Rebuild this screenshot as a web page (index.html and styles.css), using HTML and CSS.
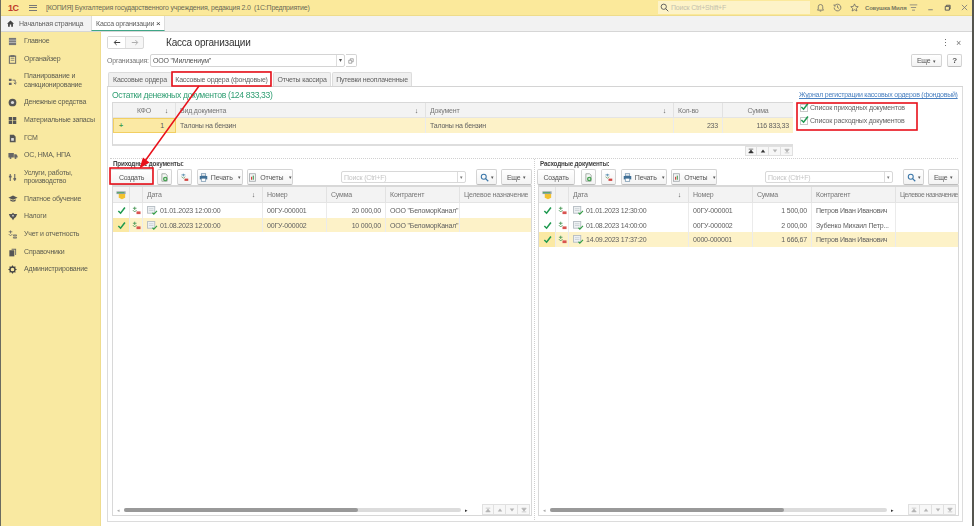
FILE: index.html
```html
<!DOCTYPE html>
<html lang="ru">
<head>
<meta charset="utf-8">
<title>Касса организации</title>
<link rel="stylesheet" href="styles.css">
</head>
<body>
<svg class="defs" width="0" height="0">
  <symbol id="i-check" viewBox="0 0 10 10"><path d="M1.5 5.500 4 8 8.800 1.600" fill="none" stroke="#1f9a50" stroke-width="1.700"/></symbol>
  <symbol id="i-dt" viewBox="0 0 10 10"><path d="M1 2.500h4M3 .8v3.600M1 4.600l2 2 2-2" fill="none" stroke="#4d9a5a" stroke-width="1"/><rect x="5" y="6" width="4.500" height="3" fill="#d9534f"/></symbol>
  <symbol id="i-doc" viewBox="0 0 12 10"><rect x=".5" y=".5" width="8" height="7.500" fill="#eef1f3" stroke="#b4bcc2"/><path d="M2 3h5M2 5h5" stroke="#c2c9ce" stroke-width=".8"/><path d="M6 7.500 7.500 9 11 5.500" fill="none" stroke="#35a045" stroke-width="1.300"/></symbol>
  <symbol id="i-head" viewBox="0 0 12 10"><rect x=".5" y="1" width="10" height="3" fill="#9aa5ac"/><path d="M3 4h7v4l-3.500 1.500L3 8z" fill="#f2c230"/><path d="M1 2.500h8" stroke="#45a85a"/></symbol>
  <symbol id="i-add" viewBox="0 0 12 12"><path d="M2.500 1h5l2 2v8h-7z" fill="#f4f7f4" stroke="#8e9a90"/><circle cx="7" cy="8" r="3" fill="#3f9d4a"/><path d="M5.500 8h3M7 6.500v3" stroke="#fff"/></symbol>
  <symbol id="i-post" viewBox="0 0 12 12"><path d="M2 2.500h5M4.500 1v3.500" stroke="#5a8fb0" stroke-width="1.200"/><path d="M2 5l2.500 2L7 5" fill="none" stroke="#6a9a60"/><rect x="6" y="7.500" width="5" height="3" fill="#d2443f"/></symbol>
  <symbol id="i-print" viewBox="0 0 12 12"><rect x="3" y="1" width="6" height="3" fill="#e9eef2" stroke="#527a9c" stroke-width=".8"/><rect x="1" y="4" width="10" height="4.500" fill="#3f6f96"/><rect x="3" y="7" width="6" height="4" fill="#fff" stroke="#527a9c" stroke-width=".8"/></symbol>
  <symbol id="i-report" viewBox="0 0 12 12"><rect x="2" y="1" width="8" height="10" fill="#f3f4f4" stroke="#9aa0a4"/><rect x="4" y="5" width="1.500" height="4" fill="#d2443f"/><rect x="6.300" y="3.500" width="1.500" height="5.500" fill="#4a9a55"/></symbol>
  <symbol id="i-search" viewBox="0 0 12 12"><circle cx="5" cy="5" r="3.300" fill="none" stroke="#3a76a8" stroke-width="1.400"/><path d="M7.500 7.500 11 11" stroke="#3a76a8" stroke-width="1.600"/></symbol>
  <symbol id="p-first" viewBox="0 0 8 8"><path d="M1 1.500h6M4 2.500 7 6.500H1z" stroke="currentColor" fill="currentColor" stroke-width=".8"/></symbol>
  <symbol id="p-up" viewBox="0 0 8 8"><path d="M4 2 7 6H1z" fill="currentColor"/></symbol>
  <symbol id="p-down" viewBox="0 0 8 8"><path d="M4 6 7 2H1z" fill="currentColor"/></symbol>
  <symbol id="p-last" viewBox="0 0 8 8"><path d="M1 6.500h6M4 5.500 7 1.500H1z" stroke="currentColor" fill="currentColor" stroke-width=".8"/></symbol>
</svg>

<div class="app">
  <header class="topbar">
    <span class="logo">1С</span>
    <span class="burger"><i></i><i></i><i></i></span>
    <span class="apptitle">[КОПИЯ] Бухгалтерия государственного учреждения, редакция 2.0&nbsp; (1С:Предприятие)</span>
    <span class="globalsearch">
      <svg class="gs-icon" viewBox="0 0 12 12"><circle cx="5" cy="5" r="3.500" fill="none" stroke="#555" stroke-width="1.200"/><path d="M7.500 7.500 11 11" stroke="#555" stroke-width="1.300"/></svg>
      Поиск Ctrl+Shift+F
    </span>
    <svg class="ti ti-bell" viewBox="0 0 12 12"><path d="M2 9.500h8L9 8V5a3 3 0 0 0-6 0v3zM5 10.800h2" fill="none" stroke="#666" stroke-width="1"/></svg>
    <svg class="ti ti-hist" viewBox="0 0 12 12"><path d="M2.300 3.500A4.500 4.500 0 1 1 1.500 6M1.500 1.800v2.200h2.200M6 3.300V6l2 1.200" fill="none" stroke="#666" stroke-width="1"/></svg>
    <svg class="ti ti-star" viewBox="0 0 12 12"><path d="M6 1.200 7.500 4.500l3.500.4-2.600 2.300.8 3.500L6 8.900l-3.200 1.800.8-3.500L1 4.900l3.500-.4z" fill="none" stroke="#666" stroke-width="1"/></svg>
    <span class="user">Совушка Миля</span>
    <svg class="ti ti-menu" viewBox="0 0 12 12"><path d="M1 2.500h10M2.500 6h7M4 9.500h4" stroke="#777" stroke-width="1"/></svg>
    <svg class="ti ti-min" viewBox="0 0 12 12"><path d="M3 9h6" stroke="#777" stroke-width="1.200"/></svg>
    <svg class="ti ti-max" viewBox="0 0 12 12"><path d="M3 4.500h5.500V9.500H3zM4.500 4.500V3h5v5H8.500" fill="none" stroke="#555" stroke-width="1.200"/></svg>
    <svg class="ti ti-close" viewBox="0 0 12 12"><path d="M2.500 2.500l7 7M9.500 2.500l-7 7" stroke="#777" stroke-width="1.100"/></svg>
  </header>

  <nav class="tabbar">
    <svg class="homeicon" viewBox="0 0 10 10"><path d="M5 .8 0 5.300h1.500V9.500h2.500V6.500h2v3h2.500V5.300H10z" fill="#444"/></svg>
    <span class="hometab">Начальная страница</span>
    <span class="doctab">Касса организации <b class="doctab-x">×</b></span>
  </nav>

  <div class="main">
    <aside class="sidebar">
      <div class="sitem"><svg class="sicon" viewBox="0 0 10 10"><path d="M1 1h8v8H1z" fill="#777"/><path d="M1 3.500h8M1 6h8" stroke="#eee" stroke-width=".6"/></svg><span>Главное</span></div>
      <div class="sitem"><svg class="sicon" viewBox="0 0 10 10"><rect x="1.500" y="1.200" width="7" height="8" fill="none" stroke="#666" stroke-width="1.100"/><path d="M3 .5h4v1.500H3zM3 4h4M3 6h4" stroke="#666" fill="#666" stroke-width=".7"/></svg><span>Органайзер</span></div>
      <div class="sitem two"><svg class="sicon" viewBox="0 0 10 10"><path d="M1 2h3v2.500H1zM1 6.500h3V9H1z" fill="#666"/><path d="M5 3.500h3v4M6.500 6.500 8 8l1.500-1.500" fill="none" stroke="#666"/></svg><span>Планирование и<br>санкционирование</span></div>
      <div class="sitem"><svg class="sicon" viewBox="0 0 10 10"><circle cx="5" cy="5" r="4.300" fill="#555"/><circle cx="5" cy="5" r="1.800" fill="#ddd"/></svg><span>Денежные средства</span></div>
      <div class="sitem"><svg class="sicon" viewBox="0 0 10 10"><path d="M.8 1h3.800v3.600H.8zM5.400 1h3.800v3.600H5.400zM.8 5.400h3.800V9H.8zM5.400 5.400h3.800V9H5.400z" fill="#555"/></svg><span>Материальные запасы</span></div>
      <div class="sitem"><svg class="sicon" viewBox="0 0 10 10"><path d="M2 .8h4.500L8.500 3v6.200H2z" fill="#555"/><rect x="3.500" y="4.500" width="3" height="3" fill="#ddd"/></svg><span>ГСМ</span></div>
      <div class="sitem"><svg class="sicon sicon-w" viewBox="0 0 12 10"><path d="M.5 2h6.500v5.500H.5zM7.500 3.500h2.500l1.500 2v2h-4z" fill="#666"/><circle cx="3" cy="8" r="1.200" fill="#666"/><circle cx="9" cy="8" r="1.200" fill="#666"/></svg><span>ОС, НМА, НПА</span></div>
      <div class="sitem two"><svg class="sicon" viewBox="0 0 10 10"><path d="M2.500 1v8M7.500 1v8" stroke="#666" stroke-width="1.200"/><path d="M1 3h3v2H1zM6 5.500h3v2H6z" fill="#666"/></svg><span>Услуги, работы,<br>производство</span></div>
      <div class="sitem"><svg class="sicon sicon-w" viewBox="0 0 12 10"><path d="M6 1.500 11.500 4 6 6.500.5 4z" fill="#555"/><path d="M2.800 6v1.800C4 9.200 8 9.200 9.200 7.800V6L6 7.500z" fill="#555"/></svg><span>Платное обучение</span></div>
      <div class="sitem"><svg class="sicon sicon-w" viewBox="0 0 12 10"><path d="M6 .5 7.500 2H11L9.500 5.500 7.500 7 6 9.500 4.500 7 2.500 5.500 1 2h3.500z" fill="#555"/><circle cx="6" cy="4" r="1" fill="#ddd"/></svg><span>Налоги</span></div>
      <div class="sitem"><svg class="sicon" viewBox="0 0 10 10"><path d="M.8 2h4M2.800.5v3.500M.8 4.500l2 2 2-2M6 5.500h3.500v1H6zM6 8h3.500v1H6z" fill="none" stroke="#666" stroke-width=".9"/></svg><span>Учет и отчетность</span></div>
      <div class="sitem"><svg class="sicon" viewBox="0 0 10 10"><path d="M4 .8h5v7H8V2H4z" fill="#666"/><path d="M1.500 2.500h5.500v6.800H1.500z" fill="#555"/></svg><span>Справочники</span></div>
      <div class="sitem"><svg class="sicon" viewBox="0 0 10 10"><circle cx="5" cy="5" r="2.800" fill="none" stroke="#444" stroke-width="1.500"/><path d="M5 .5v2M5 7.500v2M.5 5h2M7.500 5h2M1.800 1.800l1.400 1.400M6.800 6.800l1.400 1.400M1.800 8.200l1.400-1.400M6.800 3.200l1.400-1.400" stroke="#444" stroke-width="1.200"/></svg><span>Администрирование</span></div>
    </aside>

    <main class="content">
      <div class="headrow">
        <div class="navbtns">
          <span class="navbtn"><svg viewBox="0 0 10 8"><path d="M9 4H2M4.500 1 1.500 4l3 3" fill="none" stroke="#333" stroke-width="1.200"/></svg></span>
          <span class="navbtn"><svg viewBox="0 0 10 8"><path d="M1 4h7M5.500 1l3 3-3 3" fill="none" stroke="#aaa" stroke-width="1.200"/></svg></span>
        </div>
        <h1 class="formtitle">Касса организации</h1>
        <span class="formkebab">⋮</span>
        <span class="formclose">×</span>
      </div>

      <div class="orgrow">
        <span class="orglabel">Организация:</span>
        <span class="orginput">ООО "Миллениум"<span class="orgdrop">▾</span></span>
        <span class="orgcopy"><svg viewBox="0 0 8 8"><path d="M1 3h4v4H1zM3 3V1h4v4H5" fill="none" stroke="#777" stroke-width=".8"/></svg></span>
        <span class="btn btn-more">Еще <small class="caret">▾</small></span>
        <span class="btn btn-help">?</span>
      </div>

      <div class="tabs">
        <span class="tab tab-1">Кассовые ордера</span>
        <span class="tab tab-active">Кассовые ордера (фондовые)</span>
        <span class="tab tab-3">Отчеты кассира</span>
        <span class="tab tab-4">Путевки неоплаченные</span>
      </div>

      <section class="panel">
        <div class="top">
          <div class="top-left">
            <div class="heading">Остатки денежных документов (124 833,33)</div>
            <div class="table table-top">
              <div class="row row-head cols-top">
                <div class="cell cell-center">КФО<span class="sort">↓</span></div>
                <div class="cell">Вид документа<span class="sort">↓</span></div>
                <div class="cell">Документ<span class="sort">↓</span></div>
                <div class="cell">Кол-во</div>
                <div class="cell cell-center">Сумма</div>
              </div>
              <div class="row row-sel cols-top">
                <div class="cell cell-active"><span class="plus">+</span><span class="kfo">1</span></div>
                <div class="cell">Талоны на бензин</div>
                <div class="cell">Талоны на бензин</div>
                <div class="cell cell-right">233</div>
                <div class="cell cell-right">116 833,33</div>
              </div>
            </div>
            <div class="pager pager-top">
              <span class="pg dark"><svg class="pgi"><use href="#p-first"/></svg></span><span class="pg dark"><svg class="pgi"><use href="#p-up"/></svg></span><span class="pg"><svg class="pgi"><use href="#p-down"/></svg></span><span class="pg"><svg class="pgi"><use href="#p-last"/></svg></span>
            </div>
          </div>
          <div class="top-right">
            <a class="journal">Журнал регистрации кассовых ордеров (фондовый)</a>
            <label class="check"><span class="box"><svg class="boxtick" viewBox="0 0 10 10"><use href="#i-check"/></svg></span>Список приходных документов</label>
            <label class="check"><span class="box"><svg class="boxtick" viewBox="0 0 10 10"><use href="#i-check"/></svg></span>Список расходных документов</label>
          </div>
        </div>

        <div class="lists">
          <div class="list">
            <div class="listlabel">Приходные документы:</div>
            <div class="toolbar">
              <span class="btn btn-create-l">Создать</span>
              <span class="btn btn-ico"><svg class="bi"><use href="#i-add"/></svg></span>
              <span class="btn btn-ico"><svg class="bi"><use href="#i-post"/></svg></span>
              <span class="btn btn-menu"><svg class="bi"><use href="#i-print"/></svg>Печать <small class="caret">▾</small></span>
              <span class="btn btn-menu"><svg class="bi"><use href="#i-report"/></svg>Отчеты <small class="caret">▾</small></span>
              <span class="searchbox">Поиск (Ctrl+F)<span class="searchdrop">▾</span></span>
              <span class="btn btn-search"><svg class="bi"><use href="#i-search"/></svg><small class="caret">▾</small></span>
              <span class="btn btn-more2">Еще <small class="caret">▾</small></span>
            </div>
            <div class="table table-list table-l">
              <div class="row row-head rowh-list cols-l">
                <div class="cell cell-icon"><svg class="ri-head"><use href="#i-head"/></svg></div>
                <div class="cell"></div>
                <div class="cell">Дата<span class="sort">↓</span></div>
                <div class="cell">Номер</div>
                <div class="cell">Сумма</div>
                <div class="cell">Контрагент</div>
                <div class="cell">Целевое назначение</div>
              </div>
              <div class="row cols-l">
                <div class="cell cell-icon"><svg class="ri"><use href="#i-check"/></svg></div>
                <div class="cell cell-icon"><svg class="ri"><use href="#i-dt"/></svg></div>
                <div class="cell"><svg class="ri-doc"><use href="#i-doc"/></svg>01.01.2023 12:00:00</div>
                <div class="cell">00ГУ-000001</div>
                <div class="cell cell-right">20 000,00</div>
                <div class="cell">ООО "БеломорКанал"</div>
                <div class="cell"></div>
              </div>
              <div class="row row-sel cols-l">
                <div class="cell cell-icon cell-active2"><svg class="ri"><use href="#i-check"/></svg></div>
                <div class="cell cell-icon"><svg class="ri"><use href="#i-dt"/></svg></div>
                <div class="cell"><svg class="ri-doc"><use href="#i-doc"/></svg>01.08.2023 12:00:00</div>
                <div class="cell">00ГУ-000002</div>
                <div class="cell cell-right">10 000,00</div>
                <div class="cell">ООО "БеломорКанал"</div>
                <div class="cell"></div>
              </div>
              <div class="tablefoot">
                <span class="scrollarrow">◂</span>
                <span class="track"><span class="thumb"></span></span>
                <span class="scrollarrow dark">▸</span>
                <div class="pager">
                  <span class="pg"><svg class="pgi"><use href="#p-first"/></svg></span><span class="pg"><svg class="pgi"><use href="#p-up"/></svg></span><span class="pg"><svg class="pgi"><use href="#p-down"/></svg></span><span class="pg"><svg class="pgi"><use href="#p-last"/></svg></span>
                </div>
              </div>
            </div>
          </div>

          <div class="list list-r">
            <div class="listlabel">Расходные документы:</div>
            <div class="toolbar">
              <span class="btn btn-create-r">Создать</span>
              <span class="btn btn-ico"><svg class="bi"><use href="#i-add"/></svg></span>
              <span class="btn btn-ico"><svg class="bi"><use href="#i-post"/></svg></span>
              <span class="btn btn-menu"><svg class="bi"><use href="#i-print"/></svg>Печать <small class="caret">▾</small></span>
              <span class="btn btn-menu"><svg class="bi"><use href="#i-report"/></svg>Отчеты <small class="caret">▾</small></span>
              <span class="searchbox">Поиск (Ctrl+F)<span class="searchdrop">▾</span></span>
              <span class="btn btn-search"><svg class="bi"><use href="#i-search"/></svg><small class="caret">▾</small></span>
              <span class="btn btn-more2">Еще <small class="caret">▾</small></span>
            </div>
            <div class="table table-list table-r">
              <div class="row row-head rowh-list cols-r">
                <div class="cell cell-icon"><svg class="ri-head"><use href="#i-head"/></svg></div>
                <div class="cell"></div>
                <div class="cell">Дата<span class="sort">↓</span></div>
                <div class="cell">Номер</div>
                <div class="cell">Сумма</div>
                <div class="cell">Контрагент</div>
                <div class="cell cell-tiny">Целевое назначение</div>
              </div>
              <div class="row cols-r">
                <div class="cell cell-icon"><svg class="ri"><use href="#i-check"/></svg></div>
                <div class="cell cell-icon"><svg class="ri"><use href="#i-dt"/></svg></div>
                <div class="cell"><svg class="ri-doc"><use href="#i-doc"/></svg>01.01.2023 12:30:00</div>
                <div class="cell">00ГУ-000001</div>
                <div class="cell cell-right">1 500,00</div>
                <div class="cell">Петров Иван Иванович</div>
                <div class="cell"></div>
              </div>
              <div class="row cols-r">
                <div class="cell cell-icon"><svg class="ri"><use href="#i-check"/></svg></div>
                <div class="cell cell-icon"><svg class="ri"><use href="#i-dt"/></svg></div>
                <div class="cell"><svg class="ri-doc"><use href="#i-doc"/></svg>01.08.2023 14:00:00</div>
                <div class="cell">00ГУ-000002</div>
                <div class="cell cell-right">2 000,00</div>
                <div class="cell">Зубенко Михаил Петр...</div>
                <div class="cell"></div>
              </div>
              <div class="row row-sel cols-r">
                <div class="cell cell-icon cell-active2"><svg class="ri"><use href="#i-check"/></svg></div>
                <div class="cell cell-icon"><svg class="ri"><use href="#i-dt"/></svg></div>
                <div class="cell"><svg class="ri-doc"><use href="#i-doc"/></svg>14.09.2023 17:37:20</div>
                <div class="cell">0000-000001</div>
                <div class="cell cell-right">1 666,67</div>
                <div class="cell">Петров Иван Иванович</div>
                <div class="cell"></div>
              </div>
              <div class="tablefoot">
                <span class="scrollarrow">◂</span>
                <span class="track"><span class="thumb"></span></span>
                <span class="scrollarrow dark">▸</span>
                <div class="pager">
                  <span class="pg"><svg class="pgi"><use href="#p-first"/></svg></span><span class="pg"><svg class="pgi"><use href="#p-up"/></svg></span><span class="pg"><svg class="pgi"><use href="#p-down"/></svg></span><span class="pg"><svg class="pgi"><use href="#p-last"/></svg></span>
                </div>
              </div>
            </div>
          </div>
        </div>
      </section>
    </main>
  </div>
</div>

<svg class="annotations" width="974" height="526" viewBox="0 0 974 526">
  <rect x="172" y="72" width="99" height="14" fill="none" stroke="#e8101a" stroke-width="1.600"/>
  <rect x="110" y="168" width="43" height="16" fill="none" stroke="#e8101a" stroke-width="1.600"/>
  <rect x="797" y="103" width="120" height="27" fill="none" stroke="#e8101a" stroke-width="1.600"/>
  <path d="M199 86 145 161" stroke="#e8101a" stroke-width="1.500" fill="none"/>
  <path d="M139.500 168.500 143 157.500 149.500 162.500z" fill="#e8101a"/>
</svg>
</body>
</html>
```

FILE: styles.css
```css
* { box-sizing: border-box; }
html, body { margin: 0; padding: 0; }
body {
  width: 974px;
  height: 526px;
  overflow: hidden;
  background: #fff;
  font-family: "Liberation Sans", Arial, sans-serif;
  font-size: 7px;
  letter-spacing: -.2px;
  color: #5f5f5f;
  position: relative;
}
.defs { position: absolute; }
.app {
  width: 974px;
  height: 526px;
  display: flex;
  flex-direction: column;
  border-left: 1px solid #6b6b60;
  border-right: 2px solid #55554f;
  filter: blur(0.4px);
}

/* top bar */
.topbar {
  height: 16px;
  flex: none;
  display: flex;
  align-items: center;
  background: #fbe99b;
  border-bottom: 1px solid #eedc8c;
  padding-left: 7px;
}
.logo { width: 14px; font-weight: bold; font-size: 9px; color: #c0392b; letter-spacing: -.5px; }
.burger { width: 8px; margin-left: 7px; display: flex; flex-direction: column; gap: 1.500px; }
.burger i { display: block; height: 1px; background: #777; }
.apptitle { margin-left: 9px; color: #6a6a55; white-space: nowrap; width: 612px; }
.globalsearch {
  width: 152px;
  height: 13px;
  background: #fdf3c8;
  display: flex;
  align-items: center;
  gap: 2px;
  padding-left: 2px;
  color: #c4c0ac;
}
.gs-icon { width: 9px; height: 9px; }
.ti { width: 9px; height: 9px; flex: none; }
.ti-bell { margin-left: 6px; }
.ti-hist { margin-left: 8px; }
.ti-star { margin-left: 8px; }
.user { margin-left: 6px; width: 40px; font-size: 6px; font-weight: bold; color: #7a7a60; white-space: nowrap; }
.ti-menu { margin-left: 4px; }
.ti-min { margin-left: 8px; }
.ti-max { margin-left: 8px; }
.ti-close { margin-left: 8px; }

/* tab bar */
.tabbar {
  height: 16px;
  flex: none;
  display: flex;
  align-items: stretch;
  background: #f2f2f2;
  border-bottom: 1px solid #d6d6d6;
  padding-left: 6px;
}
.homeicon { width: 7px; height: 7px; align-self: center; }
.hometab { margin-left: 5px; width: 72px; align-self: center; white-space: nowrap; }
.doctab {
  width: 74px;
  padding-left: 4px;
  background: #fff;
  border-left: 1px solid #ddd;
  border-right: 1px solid #ddd;
  border-bottom: 1px solid #3fa687;
  display: flex;
  align-items: center;
  white-space: pre;
}
.doctab-x { font-size: 8px; font-weight: normal; color: #333; }

.main { flex: 1; display: flex; min-height: 0; }

/* sidebar */
.sidebar {
  width: 100px;
  flex: none;
  padding-top: 1px;
  background: #f9e9a1;
  border-right: 1px solid #efdc8e;
}
.sitem {
  height: 17.700px;
  display: flex;
  align-items: center;
  padding-left: 7px;
  color: #5c5c50;
  line-height: 8.800px;
  letter-spacing: -.18px;
}
.sitem.two { height: 25.500px; }
.sitem span { margin-left: 7px; white-space: nowrap; }
.sicon { width: 9px; height: 9px; flex: none; }
.sicon-w { width: 10px; margin-left: -.500px; margin-right: -.500px; }

/* content */
.content {
  flex: 1;
  min-width: 0;
  padding: 4px 9px 0 6px;
  background: #fff;
}
.headrow { height: 13px; display: flex; align-items: center; }
.navbtns {
  width: 37px;
  height: 13px;
  display: flex;
  border: 1px solid #d8d8d8;
  border-radius: 2px;
  background: #f6f6f6;
}
.navbtn { flex: 1; display: flex; align-items: center; justify-content: center; }
.navbtn:first-child { border-right: 1px solid #e2e2e2; background: #fff; }
.navbtn svg { width: 8px; height: 7px; }
.formtitle { margin: 0 0 0 22px; flex: 1; font-size: 10px; font-weight: normal; color: #333; line-height: 13px; }
.formkebab { width: 15px; font-size: 9px; color: #666; }
.formclose { width: 6px; margin-right: 1px; font-size: 9px; color: #777; }

.orgrow { margin-top: 5px; height: 13px; display: flex; align-items: center; }
.orglabel { width: 43px; color: #777; white-space: nowrap; }
.orginput {
  width: 195px;
  height: 13px;
  border: 1px solid #d4d4d4;
  border-radius: 2px;
  padding-left: 2px;
  display: flex;
  align-items: center;
  justify-content: space-between;
  color: #555;
}
.orgdrop { width: 8px; height: 11px; border-left: 1px solid #ddd; text-align: center; line-height: 11px; font-size: 6px; }
.orgcopy { width: 11px; height: 13px; margin-left: 1px; border: 1px solid #d4d4d4; border-left: 0; border-radius: 0 2px 2px 0; display: flex; align-items: center; justify-content: center; }
.orgcopy svg { width: 6px; height: 6px; }

.btn {
  display: inline-flex;
  align-items: center;
  justify-content: center;
  flex: none;
  border: 1px solid #d4d4d4;
  border-bottom-color: #bdbdbd;
  border-radius: 2px;
  background: linear-gradient(#fff, #f3f3f3);
  color: #555;
  white-space: pre;
}
.caret { font-size: 5px; margin-left: 1px; }
.btn-more { width: 31px; height: 13px; margin-left: 554px; }
.btn-help { width: 15px; height: 13px; margin-left: 5px; font-weight: bold; font-size: 8px; }

/* tabs */
.tabs { margin-top: 5px; height: 15px; display: flex; align-items: flex-end; border-bottom: 1px solid #d4d4d4; }
.tab {
  height: 14px;
  display: flex;
  align-items: center;
  justify-content: center;
  white-space: nowrap;
  background: #f0f0f0;
  border: 1px solid #dcdcdc;
  border-bottom: 0;
  border-radius: 2px 2px 0 0;
}
.tab-1 { width: 64px; margin-left: 1px; }
.tab-active { width: 99px; background: #fff; height: 15px; }
.tab-3 { width: 58px; margin-left: 2px; }
.tab-4 { width: 80px; margin-left: 1px; }

/* panel */
.panel {
  height: 435px;
  border: 1px solid #dcdcdc;
  border-top: 0;
  padding: 0 4px 0 2px;
}
.top { display: grid; grid-template-columns: 681px 1fr; padding: 2px 0 0 2px; height: 72px; border-bottom: 1px dotted #d0d0d0; }
.heading { height: 13px; line-height: 12px; font-size: 8.600px; letter-spacing: -.35px; color: #2f9e72; white-space: nowrap; }

.table { border-left: 1px solid #d8d8d8; }
.table-top { height: 44px; border-top: 1px solid #d8d8d8; border-bottom: 2px solid #dedede; }
.row { display: grid; height: 14.700px; align-items: stretch; }
.row-head { height: 15px; background: #f3f3f3; border-bottom: 1px solid #e4e4e4; color: #777; }
.rowh-list { height: 16px; }
.row-sel { background: #fdf2c8; }
.cols-top { grid-template-columns: 63px 250px 248px 49px 70px; }
.cols-l { grid-template-columns: 17px 13px 120px 64px 59px 74px 72px; }
.cols-r { grid-template-columns: 17px 13px 120px 64px 59px 84px 63px; }
.cell {
  display: flex;
  align-items: center;
  padding: 0 4px;
  border-right: 1px solid #ebebeb;
  white-space: nowrap;
  min-width: 0;
  position: relative;
}
.row-head .cell { border-right-color: #e2e2e2; }
.cell:last-child { border-right: 0; }
.cell-right { justify-content: flex-end; }
.cell-center { justify-content: center; }
.cell-icon { padding: 0; justify-content: center; }
.cell-tiny { letter-spacing: -.45px; padding-right: 0; font-size: 6.800px; }
.cell-active { background: #fbe9a4; border: 1px solid #f2cf62; justify-content: space-between; padding: 0 11px 0 5px; }
.cell-active2 { background: #fbe9a4; }
.plus { color: #49a050; font-weight: bold; }
.kfo { color: #555; }
.sort { position: absolute; right: 7px; color: #555; }
.ri { width: 9px; height: 9px; }
.ri-head { width: 11px; height: 10px; }
.ri-doc { width: 11px; height: 9px; margin-right: 2px; flex: none; }

.pager { display: flex; justify-content: flex-end; }
.pg {
  width: 12px;
  height: 10px;
  border: 1px solid #e0e0e0;
  border-left-width: 0;
  background: #f7f7f7;
  color: #b4b4b4;
  display: flex;
  align-items: center;
  justify-content: center;
}
.pg:first-child { border-left-width: 1px; }
.pg.dark { color: #333; }
.pgi { width: 6px; height: 6px; }

.top-right { padding-left: 5px; display: flex; flex-direction: column; }
.journal { height: 13px; line-height: 12px; margin-left: 1px; letter-spacing: -.25px; color: #4a80c0; text-decoration: underline; white-space: nowrap; }
.check { display: flex; align-items: center; height: 13px; margin-left: 2px; color: #666; white-space: nowrap; margin-top: -1px; }
.check + .check { margin-top: 0; }
.box { width: 8px; height: 8px; border: 1px solid #c9c9c9; background: #fff; margin-right: 2px; position: relative; flex: none; }
.boxtick { width: 9px; height: 9px; position: absolute; left: -1px; top: -3px; }

/* lists */
.lists { display: grid; grid-template-columns: 422px 427px; }
.list { padding-top: 1px; height: 361px; }
.list-r { border-left: 1px dotted #cfcfcf; margin-left: 2px; padding-left: 2px; width: 425px; }
.listlabel { height: 9px; line-height: 8px; padding-left: 3px; font-size: 6.300px; font-weight: bold; color: #444; white-space: nowrap; }
.toolbar { height: 16px; display: flex; align-items: stretch; gap: 4px; }
.btn-create-l { width: 43px; }
.btn-create-r { width: 38px; margin-right: 2px; }
.btn-ico { width: 15px; margin-right: 1px; }
.bi { width: 9px; height: 9px; }
.btn-menu { width: 46px; gap: 3px; }
.searchbox {
  width: 130px;
  height: 12px;
  align-self: center;
  margin-left: 44px;
  margin-right: 2px;
  border: 1px solid #d8d8d8;
  border-radius: 2px;
  padding-left: 2px;
  color: #c6c6c6;
  display: flex;
  align-items: center;
  justify-content: space-between;
}
.searchdrop { width: 8px; height: 10px; border-left: 1px solid #ddd; text-align: center; line-height: 10px; font-size: 5px; color: #777; }
.btn-search { width: 21px; gap: 1px; margin-left: 4px; }
.btn-more2 { width: 31px; }

.table-list {
  height: 331px;
  border: 1px solid #d8d8d8;
  border-top-width: 2px;
  display: flex;
  flex-direction: column;
}
.table-l { margin-left: 2px; }
.table-r { margin-left: 1px; }
.tablefoot {
  margin-top: auto;
  height: 11px;
  display: flex;
  align-items: center;
  color: #aaa;
}
.scrollarrow { width: 11px; text-align: center; font-size: 5px; }
.scrollarrow.dark { color: #333; }
.track { width: 337px; height: 4px; background: #dcdcdc; border-radius: 2px; display: block; }
.thumb { display: block; width: 234px; height: 4px; background: #999; border-radius: 2px; }
.tablefoot .pager { margin-left: 10px; }
.tablefoot .pg { height: 11px; }

.annotations { position: absolute; left: 0; top: 0; pointer-events: none; filter: blur(0.3px); }
```
